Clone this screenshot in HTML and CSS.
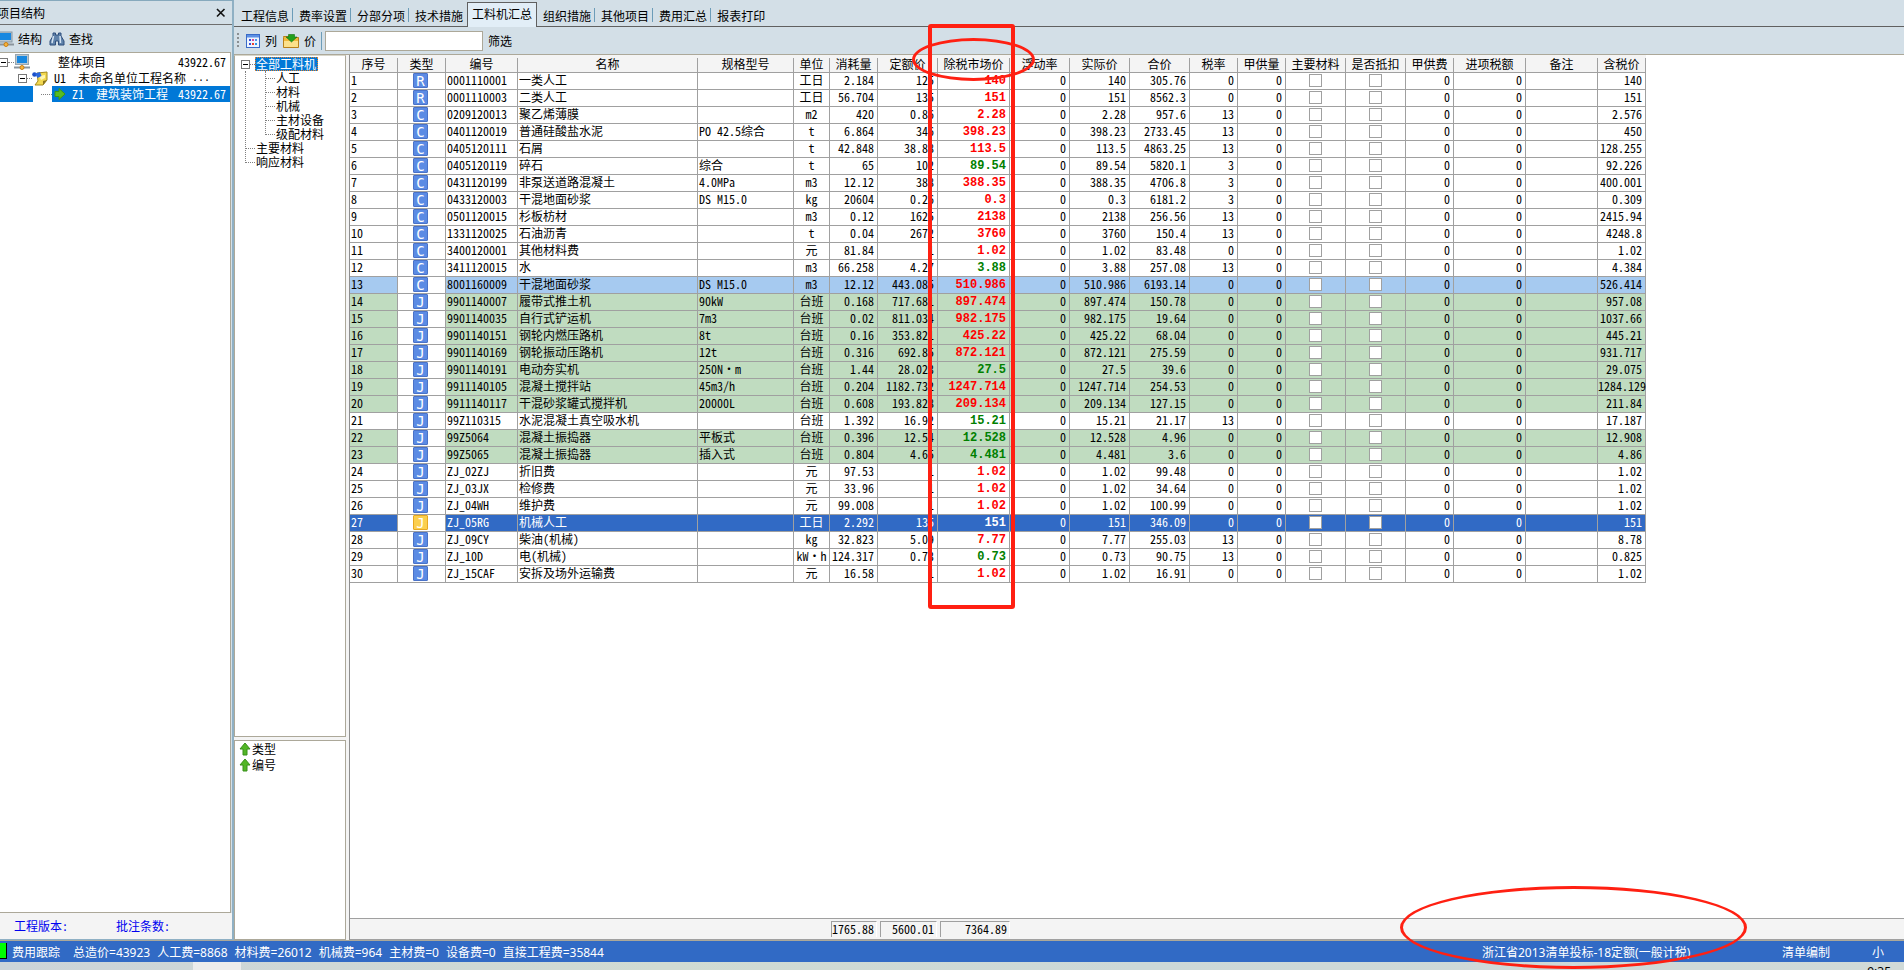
FILE: index.html
```html
<!DOCTYPE html>
<html lang="zh-CN">
<head>
<meta charset="utf-8">
<title>工料机汇总</title>
<link rel="stylesheet" href="styles.css">
</head>
<body>
<div class="workspace">
  <aside class="project">
    <header class="project-title"><span>项目结构</span>
      <button class="close" type="button" aria-label="关闭"><svg width="10" height="10" viewBox="0 0 10 10"><path d="M1 1L8.500 8.500M8.500 1L1 8.500" stroke="#111" stroke-width="1.600"/></svg></button>
    </header>
    <div class="project-tools">
      <button type="button" class="tool">
        <svg width="14" height="16" viewBox="0 0 14 16"><rect x="-2" y="1" width="14" height="10" fill="#b9c6cf" stroke="#8797a3"/><rect x="0" y="2" width="11" height="7" fill="#1888e0"/><path d="M-1 13.500H14" stroke="#8a949c" stroke-width="2"/><circle cx="6" cy="13.500" r="2" fill="#f8b43c" stroke="#c87e12"/></svg>
        <span>结构</span></button>
      <button type="button" class="tool">
        <svg width="16" height="16" viewBox="0 0 16 16"><path d="M4 2h2.500v2h3V2H12v3l3 5v4H9.500v-4h-3v4H1v-4l3-5z" fill="#5f82aa" stroke="#2f4f7c"/><path d="M4.500 5L3 12M11 5l.5 7" stroke="#d4e3f2" stroke-width="1.500"/></svg>
        <span>查找</span></button>
    </div>
    <div class="project-tree">
      <div class="node node-root"><i class="box"></i><i class="dots"></i>
        <svg width="16" height="16" viewBox="0 0 16 16"><rect x="1.500" y=".5" width="13" height="10" fill="#b9c6cf" stroke="#98a6b0"/><rect x="3" y="2" width="10" height="7" fill="#1888e0"/><path d="M0 13.500H16" stroke="#8a949c" stroke-width="2"/><circle cx="8" cy="13.500" r="2" fill="#f8b43c" stroke="#c87e12"/></svg>
        <span class="label">整体项目</span><span class="cost">43922.67</span></div>
      <div class="node node-unit"><i class="box"></i><i class="dots"></i>
        <svg width="16" height="16" viewBox="0 0 16 16"><path d="M5 3l10-1v8l-4 5H3l3-4z" fill="#f2d850" stroke="#a48a1c"/><path d="M11 15v-4l4-1z" fill="#8a741c"/><path d="M7 6l6-1v3l-4 2z" fill="#fff6b0"/><circle cx="2.500" cy="4.500" r="2.300" fill="#1c50c8"/><path d="M3 3.500l5-1.500 1.500 4-4 2z" fill="#2d68dc"/></svg>
        <span class="code">U1</span><span class="label">未命名单位工程名称<span class="more"> ···</span></span></div>
      <div class="node node-major"><i class="lead"></i><i class="dots"></i>
        <div class="picked">
          <svg width="12" height="12" viewBox="0 0 12 12"><path d="M1 3.500h4V.5l6 5.500-6 5.500v-3H1z" fill="#58bc22" stroke="#3a9812"/></svg>
          <span class="code">Z1</span><span class="label">建筑装饰工程</span><span class="cost">43922.67</span></div></div>
    </div>
    <footer class="project-foot"><span>工程版本:</span><span>批注条数:</span></footer>
  </aside>

  <main class="main">
    <nav class="tabs">
      <a href="#">工程信息</a><a href="#">费率设置</a><a href="#">分部分项</a><a href="#" class="plain">技术措施</a><a href="#" class="current">工料机汇总</a><a href="#">组织措施</a><a href="#">其他项目</a><a href="#">费用汇总</a><a href="#" class="plain">报表打印</a>
    </nav>
    <div class="tools">
      <i class="grip"></i>
      <button type="button" class="tool">
        <svg width="14" height="14" viewBox="0 0 14 14"><rect x=".5" y=".5" width="13" height="13" fill="#eef5ff" stroke="#3a6bc8"/><rect x="1" y="1" width="12" height="2.500" fill="#5c90e4"/><rect x="3" y="5" width="2" height="2" fill="#3a50d8"/><rect x="6" y="5" width="2" height="2" fill="#d8489c"/><rect x="9" y="5" width="2" height="2" fill="#5098e8"/><rect x="3" y="9" width="2" height="2" fill="#3a50d8"/><rect x="6" y="9" width="2" height="2" fill="#ee4030"/><rect x="9" y="9" width="2" height="2" fill="#2c9ae8"/></svg>
        <span>列</span></button>
      <button type="button" class="tool">
        <svg width="16" height="14" viewBox="0 0 16 14"><path d="M.5 3.500V2.500h5l1 1h9v10H.5z" fill="#f0b83c" stroke="#b8801a"/><path d="M1 7h14v6H1z" fill="#fbe08a"/><path d="M5.500 .5h6V3H14L8.500 8 3 3h2.500z" fill="#22a01c" stroke="#137010" stroke-width=".6"/></svg>
        <span>价</span></button>
      <i class="rule"></i>
      <input type="text" class="filter" id="filter">
      <label for="filter">筛选</label>
    </div>
    <div class="panes">
      <div class="groups">
        <div class="pane group-tree">
          <div class="root"><i class="box"></i><i class="dots"></i><span>全部工料机</span></div>
          <ul class="branch">
            <li>
              <ul class="leaves"><li>人工</li><li>材料</li><li>机械</li><li>主材设备</li><li>级配材料</li></ul>
            </li>
            <li class="item">主要材料</li>
            <li class="item">响应材料</li>
          </ul>
        </div>
        <div class="pane sorts">
          <div><svg width="12" height="14" viewBox="0 0 12 14"><path d="M6 1l5 6H8v6H4V7H1z" fill="#52b626" stroke="#38901a"/></svg>类型</div>
          <div><svg width="12" height="14" viewBox="0 0 12 14"><path d="M6 1l5 6H8v6H4V7H1z" fill="#52b626" stroke="#38901a"/></svg>编号</div>
        </div>
      </div>
      <section class="sheet">
        <div class="sheet-body">
          <table class="grid">
            <colgroup><col class="w48"><col class="w48"><col class="w72"><col class="w180"><col class="w96"><col class="w36"><col class="w48"><col class="w60"><col class="w72"><col class="w60"><col class="w60"><col class="w60"><col class="w48"><col class="w48"><col class="w60"><col class="w60"><col class="w48"><col class="w72"><col class="w72"><col class="w48"></colgroup>
            <thead><tr><th>序号</th><th>类型</th><th>编号</th><th>名称</th><th>规格型号</th><th>单位</th><th>消耗量</th><th>定额价</th><th>除税市场价</th><th>浮动率</th><th>实际价</th><th>合价</th><th>税率</th><th>甲供量</th><th>主要材料</th><th>是否抵扣</th><th>甲供费</th><th>进项税额</th><th>备注</th><th>含税价</th></tr></thead>
            <tbody id="rows"></tbody>
          </table>
        </div>
        <footer class="totals"><output class="t1">1765.88</output><output class="t2">5600.01</output><output class="t3">7364.89</output></footer>
      </section>
    </div>
  </main>
  <div class="mark mark-column"></div>
  <div class="mark mark-header"></div>
</div>
<div class="status">
  <i class="lamp"></i>
  <span class="track">费用跟踪</span>
  <div class="costs"><span>总造价=43923</span><span>人工费=8868</span><span>材料费=26012</span><span>机械费=964</span><span>主材费=0</span><span>设备费=0</span><span>直接工程费=35844</span></div>
  <span class="quota">浙江省2013清单投标-18定额(一般计税)</span>
  <span class="mode">清单编制</span>
  <span class="size">小</span>
</div>
<div class="taskbar"><span class="slot"></span><time>9:35</time></div>
<div class="mark mark-quota"></div>
<script src="rows.js"></script>
</body>
</html>
```
FILE: rows.js
```js
// type | code | name | spec | unit | usage | quota price | market price | colour | total | tax rate | price with tax | row style
const data = `R|0001110001|一类人工||工日|2.184|125|140|r|305.76|0|140|
R|0001110003|二类人工||工日|56.704|135|151|r|8562.3|0|151|
C|0209120013|聚乙烯薄膜||m2|420|0.86|2.28|r|957.6|13|2.576|
C|0401120019|普通硅酸盐水泥|PO 42.5综合|t|6.864|346|398.23|r|2733.45|13|450|
C|0405120111|石屑||t|42.848|38.88|113.5|r|4863.25|13|128.255|
C|0405120119|碎石|综合|t|65|102|89.54|g|5820.1|3|92.226|
C|0431120199|非泵送道路混凝土|4.0MPa|m3|12.12|388|388.35|r|4706.8|3|400.001|
C|0433120003|干混地面砂浆|DS M15.0|kg|20604|0.26|0.3|r|6181.2|3|0.309|
C|0501120015|杉板枋材||m3|0.12|1625|2138|r|256.56|13|2415.94|
C|1331120025|石油沥青||t|0.04|2672|3760|r|150.4|13|4248.8|
C|3400120001|其他材料费||元|81.84|1|1.02|r|83.48|0|1.02|
C|3411120015|水||m3|66.258|4.27|3.88|g|257.08|13|4.384|
C|8001160009|干混地面砂浆|DS M15.0|m3|12.12|443.085|510.986|r|6193.14|0|526.414|mix
J|9901140007|履带式推土机|90kW|台班|0.168|717.681|897.474|r|150.78|0|957.08|machine
J|9901140035|自行式铲运机|7m3|台班|0.02|811.034|982.175|r|19.64|0|1037.66|machine
J|9901140151|钢轮内燃压路机|8t|台班|0.16|353.821|425.22|r|68.04|0|445.21|machine
J|9901140169|钢轮振动压路机|12t|台班|0.316|692.85|872.121|r|275.59|0|931.717|machine
J|9901140191|电动夯实机|250N·m|台班|1.44|28.023|27.5|g|39.6|0|29.075|machine
J|9911140105|混凝土搅拌站|45m3/h|台班|0.204|1182.732|1247.714|r|254.53|0|1284.129|machine
J|9911140117|干混砂浆罐式搅拌机|20000L|台班|0.608|193.828|209.134|r|127.15|0|211.84|machine
J|99Z110315|水泥混凝土真空吸水机||台班|1.392|16.92|15.21|g|21.17|13|17.187|
J|99Z5064|混凝土振捣器|平板式|台班|0.396|12.54|12.528|g|4.96|0|12.908|machine
J|99Z5065|混凝土振捣器|插入式|台班|0.804|4.65|4.481|g|3.6|0|4.86|machine
J|ZJ_02ZJ|折旧费||元|97.53|1|1.02|r|99.48|0|1.02|
J|ZJ_03JX|检修费||元|33.96|1|1.02|r|34.64|0|1.02|
J|ZJ_04WH|维护费||元|99.008|1|1.02|r|100.99|0|1.02|
J|ZJ_05RG|机械人工||工日|2.292|135|151|r|346.09|0|151|selected
J|ZJ_09CY|柴油(机械)||kg|32.823|5.09|7.77|r|255.03|13|8.78|
J|ZJ_10D|电(机械)||kW·h|124.317|0.73|0.73|g|90.75|13|0.825|
J|ZJ_15CAF|安拆及场外运输费||元|16.58|1|1.02|r|16.91|0|1.02|`;

const num = v => `<td class="num">${v}</td>`;
document.getElementById('rows').innerHTML = data.split('\n').map((line, i) => {
  const [type, code, name, spec, unit, usage, quota, market, tone, total, tax, gross, style] = line.split('|');
  const check = label => `<td class="mid"><input type="checkbox" aria-label="${label} ${i + 1}"></td>`;
  return `<tr class="${style}"><td>${i + 1}</td><td class="kind"><span class="badge">${type}</span></td>` +
    `<td>${code}</td><td>${name}</td><td>${spec}</td><td class="mid">${unit}</td>` +
    num(usage) + num(quota) + `<td class="num market ${tone}">${market}</td>` +
    num(0) + num(market) + num(total) + num(tax) + num(0) +
    check('主要材料') + check('是否抵扣') + num(0) + num(0) + `<td></td>` + num(gross) + `</tr>`;
}).join('');
```
FILE: styles.css
```css
* { box-sizing: border-box; }
html, body { height: 100%; }
body {
  margin: 0;
  display: flex;
  flex-direction: column;
  overflow: hidden;
  position: relative;
  background: #f4f4f4;
  color: #000;
  font: 12px/16px "Noto Sans Mono CJK SC", "Noto Sans CJK SC", sans-serif;
}
button { font: inherit; color: inherit; border: 0; background: none; padding: 0; }
svg { display: block; flex: none; }
ul { list-style: none; margin: 0; padding: 0; }

.workspace { flex: 1; min-height: 0; display: flex; position: relative; border-bottom: 1px solid #aca899; }

.project { width: 234px; flex: none; display: flex; flex-direction: column; border-top: 1px solid #86a9bd; border-right: 2px solid #8fb0c4; background: #d3dfe7; }
.project-title { height: 24px; display: flex; align-items: center; justify-content: space-between; padding: 0 4px 0 0; border-bottom: 1px solid #6e6e6e; }
.project-title span { margin-left: -3px; }
.close { width: 12px; height: 10px; }
.project-tools { height: 27px; display: flex; align-items: center; gap: 7px; }
.tool { display: flex; align-items: center; gap: 4px; }
.project-tree { flex: 1; background: #fff; border: 1px solid #aca899; border-left: 0; margin-right: 1px; padding-top: 1px; }
.node { height: 16px; display: flex; align-items: center; white-space: pre; line-height: 16px; }
.box { width: 9px; height: 9px; flex: none; border: 1px solid #787878; background: linear-gradient(#000, #000) center / 5px 1px no-repeat #fff; }
.dots { height: 1px; flex: none; border-top: 1px dotted #808080; }
.cost { margin-left: auto; padding-right: 4px; }
.more { font: 10px/12px "Liberation Mono", monospace; }
.node-root .box { margin-left: -1px; }
.node-root .dots { width: 6px; }
.node-root .label { margin-left: 28px; }
.node-unit { padding-left: 18px; }
.node-unit .dots { width: 5px; }
.node-unit .code { margin: 0 12px 0 6px; }
.node-major .lead { width: 33px; height: 16px; background: #0078d7; }
.node-major .dots { width: 11px; margin-left: 8px; }
.picked { flex: 1; height: 16px; display: flex; align-items: center; padding-left: 2px; background: #0078d7; color: #fff; }
.picked .code { margin: 0 12px 0 6px; }
.project-foot { height: 27px; display: flex; align-items: center; gap: 48px; padding-left: 14px; background: #f4f4f4; border-bottom: 1px solid #8fb0c4; color: #0000f0; }

.main { flex: 1; min-width: 0; display: flex; flex-direction: column; background: #d3dfe7; }
.tabs { height: 27px; display: flex; padding: 2px 0 0 1px; border-bottom: 1px solid #606060; line-height: 16px; }
.tabs a { color: #000; text-decoration: none; height: 14px; margin-top: 6px; padding: 0 3px 0 6px; border-right: 1px solid #6c9cb8; line-height: 16px; }
.tabs a.plain { border-color: transparent; }
.tabs a.current { margin: 0 0 -1px; height: 25px; padding: 3px 4px 0; border: 1px solid #606060; border-bottom: 0; background: #e2eef7; }
.tools { height: 28px; display: flex; align-items: center; padding-left: 3px; border-bottom: 1px solid #aca899; }
.grip { width: 2px; height: 15px; margin-right: 7px; background: repeating-linear-gradient(#8a8f92 0 2px, transparent 2px 4px); }
.tools .tool { gap: 5px; }
.tools .tool + .tool { margin-left: 6px; }
.rule { width: 1px; height: 18px; margin: 0 3px 0 5px; background: #6c9cb8; }
.filter { width: 158px; height: 20px; border: 1px solid #aca899; background: #fff; padding: 0 3px; font: inherit; }
.tools label { margin-left: 5px; }

.panes { flex: 1; min-height: 0; display: flex; gap: 3px; background: #f4f4f4; }
.groups { width: 112px; flex: none; display: grid; grid-template-rows: 683fr 200fr; gap: 3px; }
.pane { background: #fff; border: 1px solid #aca899; border-top-color: #d8d6ca; }
.group-tree { padding: 1px 0 0 6px; line-height: 14px; }
.root { display: flex; align-items: center; height: 14px; }
.root .dots { width: 5px; }
.root span { background: #0078d7; color: #fff; outline: 1px dotted #e08030; outline-offset: -1px; padding: 0 2px 0 1px; }
.branch { margin-left: 4px; border-left: 1px dotted #808080; height: 92px; }
.leaves { margin-left: 19px; border-left: 1px dotted #808080; height: 64px; margin-bottom: 6px; }
.leaves li, .item { height: 14px; display: flex; align-items: center; white-space: nowrap; }
.leaves li::before, .item::before { content: ""; width: 9px; margin-right: 1px; border-top: 1px dotted #808080; }
.sorts { padding: 0 0 0 4px; border-top-color: #aca899; }
.sorts div { display: flex; align-items: center; gap: 1px; }

.sheet { flex: 1; min-width: 0; display: flex; flex-direction: column; border-left: 1px solid #8e8e8e; background: #fff; }
.sheet-body { flex: 1; min-height: 0; overflow: hidden; }
.grid { table-layout: fixed; width: 1296px; border-collapse: separate; border-spacing: 0; }
.w36 { width: 36px; } .w48 { width: 48px; } .w60 { width: 60px; } .w72 { width: 72px; } .w96 { width: 96px; } .w180 { width: 180px; }
.grid th { height: 18px; padding: 0 1px 0 0; font-weight: normal; line-height: 16px; white-space: nowrap; border-bottom: 1px solid #a0a0a0; background: linear-gradient(#a0a0a0, #a0a0a0) right bottom / 1px 14px no-repeat #f4f4f4; }
.grid td { height: 17px; padding: 0 1px; line-height: 14px; white-space: pre; vertical-align: top; border: solid #a0a0a0; border-width: 0 1px 1px 0; }
.grid .num { text-align: right; padding-right: 3px; }
.grid .num:last-child { padding-left: 0; }
.grid .mid { text-align: center; padding: 0; }
.grid .market { font-family: "Liberation Mono", monospace; font-weight: bold; line-height: 16px; }
.r { color: #f00; }
.g { color: #008000; }
.mix td { background: #a6caf0; }
.machine td { background: #c0dcc0; }
.grid .selected td { background: #316ac5; color: #fff; }
.grid td.kind, .grid .selected td.kind { background: #fff; padding: 0 2px 0 0; }
.badge { display: block; width: 15px; height: 15px; margin: 0 auto; border: 1px solid #4a72c8; border-radius: 1px; background: #5b8be4; color: #fff; text-align: center; font: 14px/14px "DejaVu Sans Mono", monospace; }
.selected .badge { background: #fbcf4e; border-color: #e8a820; }
.grid input { appearance: none; display: block; width: 13px; height: 13px; margin: 1px auto; border: 1px solid #a0a0a0; background: #fff; }
.totals { height: 22px; flex: none; display: flex; gap: 3px; padding: 2px 0 0 481px; background: #f4f4f4; border-top: 1px solid #a0a0a0; border-bottom: 1px solid #a0a0a0; }
.totals output { height: 16px; padding-right: 2px; text-align: right; line-height: 14px; border-top: 1px solid #a0a0a0; border-left: 1px solid #a0a0a0; border-right: 1px solid #fff; }
.t1 { width: 46px; } .t2 { width: 57px; } .t3 { width: 70px; }

.status { height: 21px; flex: none; display: flex; align-items: center; background: #316ac5; color: #fff; font-family: "Noto Sans", "Noto Sans CJK SC", sans-serif; white-space: nowrap; padding-top: 3px; }
.lamp { width: 7px; height: 16px; margin: -4px 5px 0 0; background: #0f0; border: solid #000; border-width: 0 1px 1px 0; }
.costs { display: flex; gap: 7px; margin-left: 13px; }
.quota { margin-left: auto; width: 300px; }
.mode { width: 90px; }
.size { width: 32px; }
.taskbar { height: 8px; flex: none; overflow: hidden; display: flex; justify-content: space-between; padding: 0 13px 0 193px; background: linear-gradient(90deg, #ccd4d9, #d0dbd3 35%, #ccd8d8 60%, #d0dad8); }
.slot { width: 48px; background: #ececec; }
.taskbar time { font: 12px/14px "Noto Sans", sans-serif; padding-top: 3px; }

/* Annotations drawn over the window */
.mark { position: absolute; border: 4px solid #ff2012; pointer-events: none; }
.mark-column { left: 928px; top: 24px; width: 87px; height: 585px; border-radius: 3px; }
.mark-header { left: 912px; top: 38px; width: 123px; height: 43px; border-width: 3px; border-radius: 50%; }
.mark-quota { left: 1400px; top: 886px; width: 347px; height: 83px; border-width: 3px; border-radius: 50%; }
```
